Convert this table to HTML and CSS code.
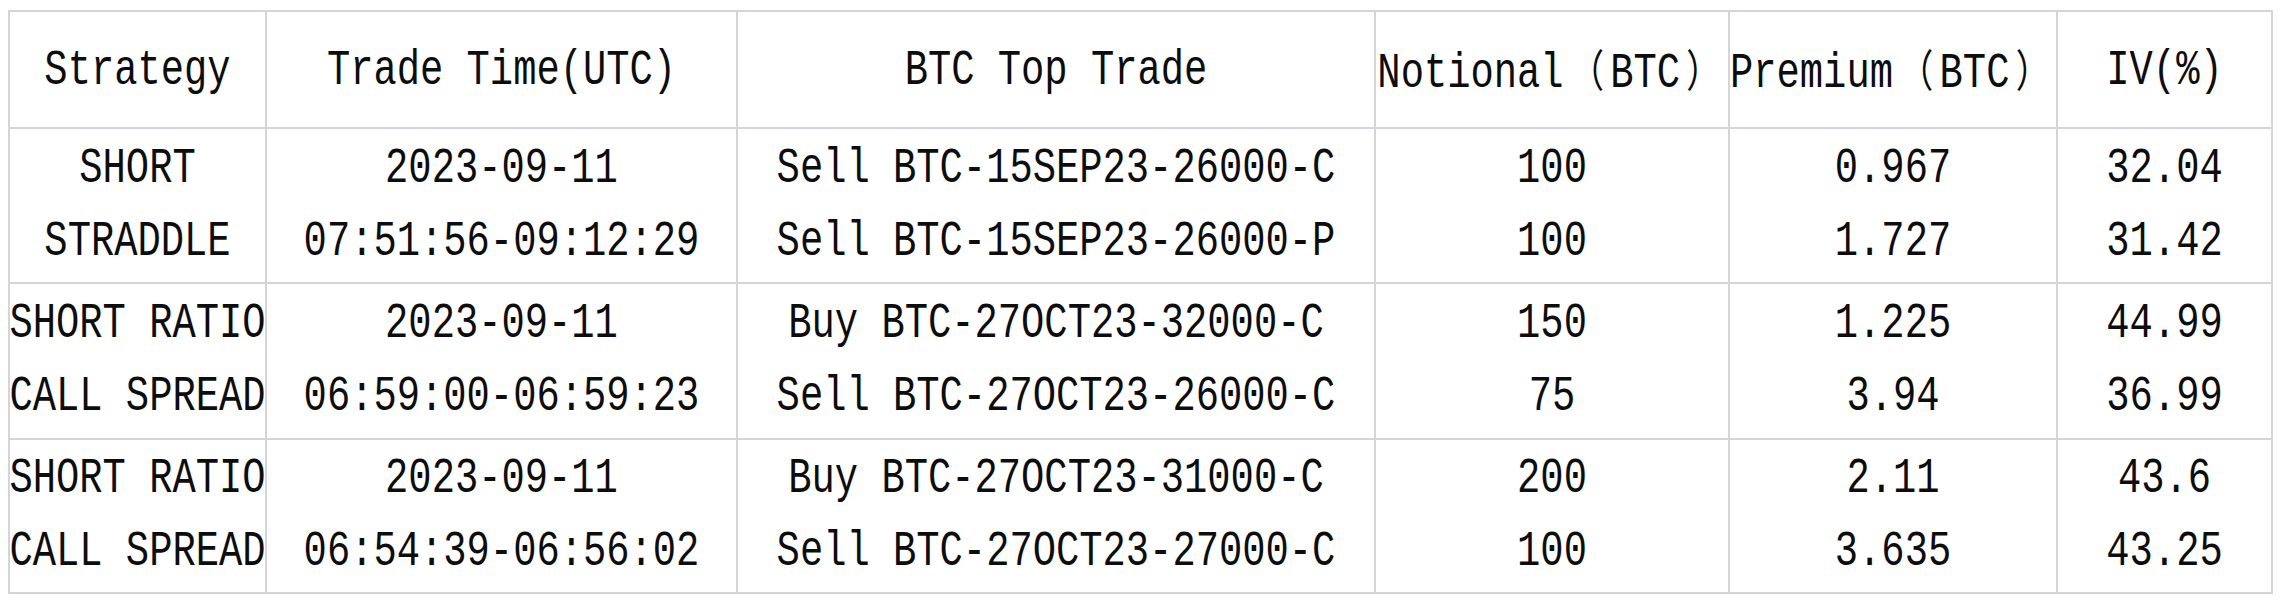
FILE: index.html
```html
<!DOCTYPE html>
<html lang="en">
<head>
<meta charset="utf-8">
<title>BTC Top Trades</title>
<link rel="stylesheet" href="styles.css">
</head>
<body>
<div class="page">
  <div class="grid">
    <div class="cell head"><span class="ln">Strategy</span></div>
    <div class="cell head"><span class="ln">Trade Time(UTC)</span></div>
    <div class="cell head"><span class="ln">BTC Top Trade</span></div>
    <div class="cell head"><span class="ln">Notional<span class="fw">（</span>BTC<span class="fw">）</span></span></div>
    <div class="cell head"><span class="ln">Premium<span class="fw">（</span>BTC<span class="fw">）</span></span></div>
    <div class="cell head"><span class="ln">IV(%)</span></div>

    <div class="cell"><span class="ln">SHORT</span><span class="ln">STRADDLE</span></div>
    <div class="cell"><span class="ln">2023-09-11</span><span class="ln">07:51:56-09:12:29</span></div>
    <div class="cell"><span class="ln">Sell BTC-15SEP23-26000-C</span><span class="ln">Sell BTC-15SEP23-26000-P</span></div>
    <div class="cell"><span class="ln">100</span><span class="ln">100</span></div>
    <div class="cell"><span class="ln">0.967</span><span class="ln">1.727</span></div>
    <div class="cell"><span class="ln">32.04</span><span class="ln">31.42</span></div>

    <div class="cell"><span class="ln">SHORT RATIO</span><span class="ln">CALL SPREAD</span></div>
    <div class="cell"><span class="ln">2023-09-11</span><span class="ln">06:59:00-06:59:23</span></div>
    <div class="cell"><span class="ln">Buy BTC-27OCT23-32000-C</span><span class="ln">Sell BTC-27OCT23-26000-C</span></div>
    <div class="cell"><span class="ln">150</span><span class="ln">75</span></div>
    <div class="cell"><span class="ln">1.225</span><span class="ln">3.94</span></div>
    <div class="cell"><span class="ln">44.99</span><span class="ln">36.99</span></div>

    <div class="cell"><span class="ln">SHORT RATIO</span><span class="ln">CALL SPREAD</span></div>
    <div class="cell"><span class="ln">2023-09-11</span><span class="ln">06:54:39-06:56:02</span></div>
    <div class="cell"><span class="ln">Buy BTC-27OCT23-31000-C</span><span class="ln">Sell BTC-27OCT23-27000-C</span></div>
    <div class="cell"><span class="ln">200</span><span class="ln">100</span></div>
    <div class="cell"><span class="ln">2.11</span><span class="ln">3.635</span></div>
    <div class="cell"><span class="ln">43.6</span><span class="ln">43.25</span></div>
  </div>
</div>
</body>
</html>
```
FILE: styles.css
```css
html, body {
  margin: 0;
  padding: 0;
  background: #ffffff;
}

.page {
  padding: 10px 0 0 8px;
}

.grid {
  display: grid;
  width: max-content;
  grid-template-columns: 257px 471px 638px 354px 328px 215px;
  grid-template-rows: 117px 155px 156px 154px;
  border-top: 2px solid #d4d4da;
  border-left: 2px solid #d4d4da;
}

.cell {
  box-sizing: border-box;
  border-right: 2px solid #d4d4da;
  border-bottom: 2px solid #d4d4da;
  display: flex;
  flex-direction: column;
  align-items: center;
  justify-content: center;
  font-family: "Liberation Mono", "Noto Sans CJK SC", monospace;
  font-size: 38.8px;
  color: #0d0d0d;
  white-space: nowrap;
}

.head {
  padding-top: 3px;
}

.ln {
  display: block;
  line-height: 73px;
  transform: scaleY(1.3);
}

.fw {
  display: inline-block;
  width: 46.6px;
  text-align: center;
  font-family: "Noto Sans CJK SC", sans-serif;
  font-size: 34px;
}
```
